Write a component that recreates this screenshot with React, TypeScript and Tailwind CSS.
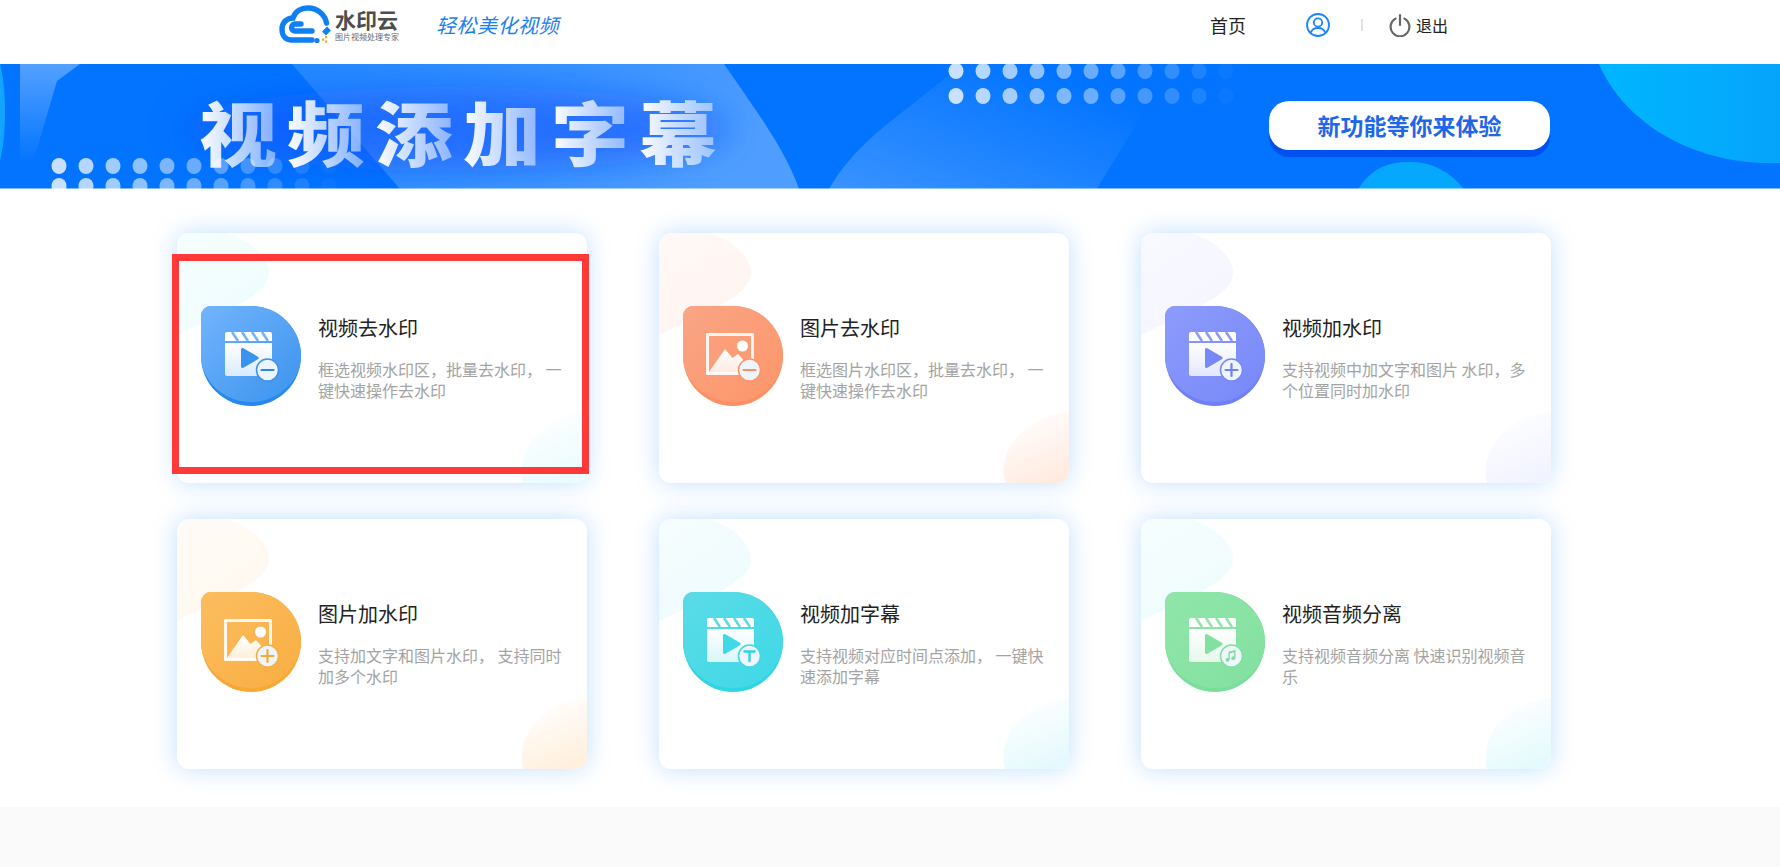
const cjk = "font-['Noto_Sans_CJK_SC','Noto_Sans_CJK_JP',sans-serif]";

type Tool = {
  id: string;
  title: string;
  desc: string;
  from: string;
  to: string;
  dark: string;
  tint: string;
  corner: string;
  art: "video" | "image";
  badge: "minus" | "plus" | "text" | "music";
};

const tools: Tool[] = [
  { id: "a", title: "视频去水印", desc: "框选视频水印区，批量去水印， 一键快速操作去水印", from: "#72b4fc", to: "#3a93ee", dark: "#2589ee", tint: "#eefcfd", corner: "#e9fbfd", art: "video", badge: "minus" },
  { id: "b", title: "图片去水印", desc: "框选图片水印区，批量去水印， 一键快速操作去水印", from: "#f9a585", to: "#fe9569", dark: "#fe8f62", tint: "#fff4f0", corner: "#ffeadf", art: "image", badge: "minus" },
  { id: "c", title: "视频加水印", desc: "支持视频中加文字和图片 水印，多个位置同时加水印", from: "#8d9bfb", to: "#7788f9", dark: "#6f80f7", tint: "#f4f5ff", corner: "#f1f3ff", art: "video", badge: "plus" },
  { id: "d", title: "图片加水印", desc: "支持加文字和图片水印， 支持同时加多个水印", from: "#fcbd60", to: "#f8ae42", dark: "#f7a834", tint: "#fff8f0", corner: "#ffefdc", art: "image", badge: "plus" },
  { id: "e", title: "视频加字幕", desc: "支持视频对应时间点添加， 一键快速添加字幕", from: "#5adbe7", to: "#3fd8e6", dark: "#30d5e3", tint: "#eefbfd", corner: "#e4f9fd", art: "video", badge: "text" },
  { id: "f", title: "视频音频分离", desc: "支持视频音频分离 快速识别视频音乐", from: "#90e6aa", to: "#82e0a0", dark: "#7bdd9b", tint: "#effcfc", corner: "#e4fafc", art: "video", badge: "music" },
];

function Badge({ tool }: { tool: Tool }) {
  const c = tool.to;
  return (
    <g>
      <circle cx="66.5" cy="64" r="11" fill="#eef5fd" stroke={c} strokeWidth="1.5" />
      {tool.badge === "minus" && <path d="M60.5 64h12" stroke={tool.dark} strokeWidth="2.2" strokeLinecap="round" />}
      {tool.badge === "plus" && <path d="M60.5 64h12M66.5 58v12" stroke={tool.dark} strokeWidth="2.2" strokeLinecap="round" />}
      {tool.badge === "text" && <path d="M61.5 59.5h10M66.5 59.5v9.5" stroke={tool.dark} strokeWidth="2.4" strokeLinecap="round" />}
      {tool.badge === "music" && (
        <g fill={tool.dark}>
          <path d="M63.5 59.8l7-1.8v8h-1.3v-5.8l-4.4 1.2v6h-1.3z" />
          <circle cx="62.5" cy="67.8" r="1.9" />
          <circle cx="68.2" cy="66.2" r="1.9" />
        </g>
      )}
    </g>
  );
}

function ToolIcon({ tool }: { tool: Tool }) {
  const id = tool.id;
  return (
    <svg viewBox="0 0 100 100" className="w-[100px] h-[100px] shrink-0">
      <defs>
        <linearGradient id={`drop-${id}`} x1="0" y1="0" x2="1" y2="1">
          <stop offset="0" stopColor={tool.from} />
          <stop offset="1" stopColor={tool.to} />
        </linearGradient>
        <linearGradient id={`art-${id}`} x1="0" y1="0" x2="0" y2="1">
          <stop offset="0" stopColor="#ffffff" />
          <stop offset="1" stopColor="#ffffff" stopOpacity="0.78" />
        </linearGradient>
      </defs>
      <path d="M10 0H50A50 50 0 1 1 0 50V10A10 10 0 0 1 10 0Z" fill={tool.dark} />
      <path d="M10 0H50A50 50 0 0 1 100 50C100 74 78 96 50 96C22 96 0 74 0 50V10A10 10 0 0 1 10 0Z" fill={`url(#drop-${id})`} />
      {tool.art === "video" ? (
        <g>
          <path d="M26 26h43a2 2 0 0 1 2 2v7H24v-7a2 2 0 0 1 2-2z" fill="#ffffff" />
          <path d="M31 26l6 9M41 26l6 9M51 26l6 9M61 26l6 9" stroke={tool.from} strokeWidth="2.6" />
          <path d="M24 37h47v31a2 2 0 0 1-2 2H26a2 2 0 0 1-2-2z" fill={`url(#art-${id})`} />
          <path d="M40 43.5a1.5 1.5 0 0 1 2.3-1.3l14.6 8.5a1.5 1.5 0 0 1 0 2.6l-14.6 8.5a1.5 1.5 0 0 1-2.3-1.3z" fill={tool.to} />
        </g>
      ) : (
        <g>
          <path d="M24.5 28.5h45v39h-45z" fill="none" stroke="#ffffff" strokeOpacity="0.9" strokeWidth="3" strokeLinejoin="round" />
          <circle cx="59.5" cy="40" r="5.5" fill="#ffffff" />
          <path d="M26 66L42 43L49.5 52L55 48L66 60V67H26z" fill={`url(#art-${id})`} />
        </g>
      )}
      <Badge tool={tool} />
    </svg>
  );
}

function ToolCard({ tool, marked }: { tool: Tool; marked?: boolean }) {
  const id = tool.id;
  return (
    <div className="relative h-[250px] rounded-xl bg-white shadow-[0_0_24px_rgba(30,140,255,0.28)]">
      <svg viewBox="0 0 410 250" className="absolute inset-0 w-full h-full rounded-xl">
        <defs>
          <linearGradient id={`tl-${id}`} x1="0" y1="0" x2="0.6" y2="1">
            <stop offset="0" stopColor={tool.tint} stopOpacity="0.55" />
            <stop offset="1" stopColor={tool.tint} />
          </linearGradient>
          <linearGradient id={`br-${id}`} x1="0.3" y1="0" x2="0.7" y2="1">
            <stop offset="0" stopColor={tool.corner} stopOpacity="0" />
            <stop offset="1" stopColor={tool.corner} />
          </linearGradient>
        </defs>
        <path d="M12 0H50C75 8 92 25 92 40C92 62 50 78 0 102V12A12 12 0 0 1 12 0Z" fill={`url(#tl-${id})`} />
        <path d="M346 250C338 215 365 185 410 178V238A12 12 0 0 1 398 250Z" fill={`url(#br-${id})`} />
      </svg>
      <div className="relative flex gap-[17px] pl-6 pt-[73px]">
        <ToolIcon tool={tool} />
        <div className="w-[250px] pt-2">
          <h3 className={`text-[20px] leading-7 font-normal text-[#222222] ${cjk}`}>{tool.title}</h3>
          <p className={`mt-[17px] text-[16px] leading-[21px] text-[#a3a3a3] ${cjk}`}>{tool.desc}</p>
        </div>
      </div>
      {marked && <div className="absolute -left-[5px] top-[21px] w-[417px] h-[220px] border-[7px] border-[#ff3838]" />}
    </div>
  );
}

function Logo() {
  return (
    <svg viewBox="0 0 54 40" className="w-[54px] h-10 shrink-0">
      <g fill="none" stroke="#0f7ff6" strokeWidth="5.4" strokeLinecap="round">
        <path d="M33 35H12C6 35 3 30 3 24C3 17.5 8 13 14 13C16 6.5 22 3 29 3C39 3 46 10 47.5 18" />
        <path d="M33 26H16C11.5 26 11.5 19.5 16 19H22" />
        <path d="M50 23.5L45 28.5" strokeWidth="5.5" strokeLinecap="butt" />
      </g>
      <circle cx="38" cy="35.5" r="2.6" fill="#0f7ff6" />
      <rect x="43" y="33.5" width="2.2" height="2.2" fill="#f5a623" />
      <rect x="46" y="31" width="2.2" height="2.2" fill="#f5a623" />
      <rect x="46" y="35.5" width="2.2" height="2.2" fill="#f5a623" />
    </svg>
  );
}

function BannerArt() {
  const dots = Array.from({ length: 11 }, (_, i) => i);
  return (
    <svg viewBox="0 0 1780 125" className="absolute inset-0 w-full h-full">
      <defs>
        <linearGradient id="big" x1="0" y1="0" x2="1" y2="0.3">
          <stop offset="0" stopColor="#2389ff" />
          <stop offset="1" stopColor="#4f9eff" />
        </linearGradient>
        <linearGradient id="lower" x1="0" y1="1" x2="1" y2="0">
          <stop offset="0" stopColor="#3a93ff" />
          <stop offset="0.8" stopColor="#0274ff" />
        </linearGradient>
        <linearGradient id="cyan" x1="0" y1="0" x2="1" y2="0">
          <stop offset="0" stopColor="#00b6ff" />
          <stop offset="1" stopColor="#05a4fb" />
        </linearGradient>
        <linearGradient id="edge" x1="0" y1="0" x2="0" y2="1">
          <stop offset="0" stopColor="#ffffff" stopOpacity="0.32" />
          <stop offset="1" stopColor="#ffffff" stopOpacity="0" />
        </linearGradient>
        <filter id="glow" x="-30%" y="-60%" width="160%" height="220%">
          <feGaussianBlur stdDeviation="18" />
        </filter>
      </defs>
      <path d="M20 0H80L57 17L34 95L20 100Z" fill="url(#edge)" />
      <ellipse cx="-8" cy="48" rx="13" ry="62" fill="#12a4ff" />
      <path d="M292 0H724C755 45 785 85 799 125H400Z" fill="url(#big)" />
      <path d="M829 125C860 70 920 40 960 0H1163C1150 45 1120 85 1097 125Z" fill="url(#lower)" />
      <path d="M1599 0C1625 60 1695 102 1780 99V0Z" fill="url(#cyan)" />
      <path d="M1358 125C1375 100 1392 98 1412 98C1432 98 1450 108 1464 125Z" fill="#05a8fd" />
      <ellipse cx="455" cy="65" rx="275" ry="42" fill="#1257ff" fillOpacity="0.6" filter="url(#glow)" />
      {dots.map((i) => (
        <g key={i} fill="#ffffff" fillOpacity={0.78 - i * 0.074}>
          <ellipse cx={59 + i * 27} cy="102" rx="7.5" ry="8" />
          <ellipse cx={59 + i * 27} cy="122" rx="7.5" ry="8" />
          <ellipse cx={956 + i * 27} cy="7" rx="7.5" ry="8" />
          <ellipse cx={956 + i * 27} cy="32" rx="7.5" ry="8" />
        </g>
      ))}
      <rect x="0" y="124" width="1780" height="1" fill="#ffffff" fillOpacity="0.5" />
    </svg>
  );
}

const bannerChars = ["视", "频", "添", "加", "字", "幕"];

export default function App() {
  return (
    <div className={`min-h-screen flex flex-col bg-white ${cjk}`}>
      <header className="h-16 flex items-center pb-[14px] bg-white">
        <div className="ml-[279px] flex items-center">
          <Logo />
          <div className="ml-[2px] w-[66px]">
            <div className="text-[21px] leading-[22px] font-bold text-[#4d4d4d]">水印云</div>
            <div className="mt-[2px] text-[8px] leading-[10px] text-[#666666] whitespace-nowrap">图片视频处理专家</div>
          </div>
          <div className="ml-[35px] text-[20px] leading-6 italic tracking-[0.5px] text-[#1a80f2]">轻松美化视频</div>
        </div>
        <nav className="ml-[651px] flex items-center">
          <a className="text-[18px] text-[#222222]">首页</a>
          <svg viewBox="0 0 24 24" className="ml-[60px] w-6 h-6" fill="none" stroke="#1a85ff" strokeWidth="1.8">
            <circle cx="12" cy="12" r="11" />
            <circle cx="12" cy="9.5" r="4.2" />
            <path d="M4.5 20c1.2-3.4 4-5 7.5-5s6.3 1.6 7.5 5" />
          </svg>
          <span className="ml-[31px] w-[2px] h-3 bg-[#dfe2e8]" />
          <svg viewBox="0 0 22 24" className="ml-[26px] w-[22px] h-6" fill="none" stroke="#666666" strokeWidth="2.2" strokeLinecap="round">
            <path d="M11 2v10" />
            <path d="M6.5 5.6a9.4 9.4 0 1 0 9 0" />
          </svg>
          <a className="ml-[5px] text-[16px] text-[#222222]">退出</a>
        </nav>
      </header>

      <section className="relative h-[125px] overflow-hidden bg-[#0274ff] flex justify-between pl-[199px] pr-[230px]">
        <BannerArt />
        <h1 className="relative pt-[25px] flex text-[78px] leading-[80px] font-black">
          {bannerChars.map((c) => (
            <span key={c} className="w-[88px] scale-y-90 bg-gradient-to-r from-white to-white/40 bg-clip-text text-transparent">
              {c}
            </span>
          ))}
        </h1>
        <button className="relative mt-[37px] w-[281px] h-[49px] rounded-[20px] bg-white shadow-[0_7px_0_#0052f0] text-[23px] font-bold text-[#1f66e8]">
          新功能等你来体验
        </button>
      </section>

      <main className="ml-[177px] w-[1374px] pt-[44px] pb-[38px] grid grid-cols-3 gap-x-[72px] gap-y-[36px]">
        {tools.map((t, i) => (
          <ToolCard key={t.id} tool={t} marked={i === 0} />
        ))}
      </main>

      <footer className="flex-1 bg-[#fafafa]" />
    </div>
  );
}
